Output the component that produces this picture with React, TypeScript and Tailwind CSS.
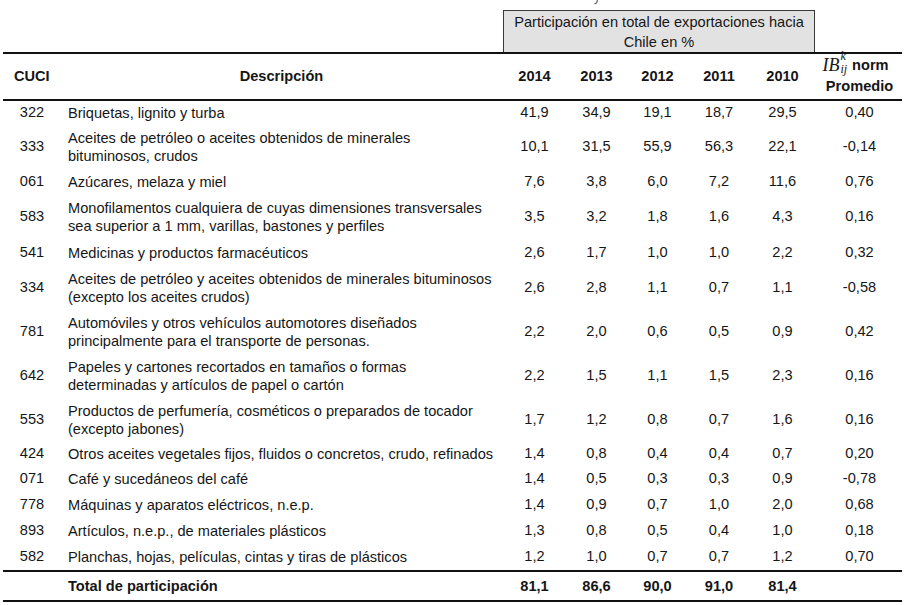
import React from "react";

interface Row {
  code: string;
  desc: string[];
  values: string[];
  ib: string;
  h: string;
}

// row heights tuned so the text centres fall where the scan puts them
const rows: Row[] = [
  { code: "322", desc: ["Briquetas, lignito y turba"], values: ["41,9", "34,9", "19,1", "18,7", "29,5"], ib: "0,40", h: "h-[24px]" },
  { code: "333", desc: ["Aceites de petróleo o aceites obtenidos de minerales", "bituminosos, crudos"], values: ["10,1", "31,5", "55,9", "56,3", "22,1"], ib: "-0,14", h: "h-[44px]" },
  { code: "061", desc: ["Azúcares, melaza y miel"], values: ["7,6", "3,8", "6,0", "7,2", "11,6"], ib: "0,76", h: "h-[26px]" },
  { code: "583", desc: ["Monofilamentos cualquiera de cuyas dimensiones transversales", "sea superior a 1 mm, varillas, bastones y perfiles"], values: ["3,5", "3,2", "1,8", "1,6", "4,3"], ib: "0,16", h: "h-[44px]" },
  { code: "541", desc: ["Medicinas y productos farmacéuticos"], values: ["2,6", "1,7", "1,0", "1,0", "2,2"], ib: "0,32", h: "h-[27px]" },
  { code: "334", desc: ["Aceites de petróleo y aceites obtenidos de minerales bituminosos", "(excepto los aceites crudos)"], values: ["2,6", "2,8", "1,1", "0,7", "1,1"], ib: "-0,58", h: "h-[44px]" },
  { code: "781", desc: ["Automóviles y otros vehículos automotores diseñados", "principalmente para el transporte de personas."], values: ["2,2", "2,0", "0,6", "0,5", "0,9"], ib: "0,42", h: "h-[44px]" },
  { code: "642", desc: ["Papeles y cartones recortados en tamaños o formas", "determinadas y artículos de papel o cartón"], values: ["2,2", "1,5", "1,1", "1,5", "2,3"], ib: "0,16", h: "h-[44px]" },
  { code: "553", desc: ["Productos de perfumería, cosméticos o preparados de tocador", "(excepto jabones)"], values: ["1,7", "1,2", "0,8", "0,7", "1,6"], ib: "0,16", h: "h-[44px]" },
  { code: "424", desc: ["Otros aceites vegetales fijos, fluidos o concretos, crudo, refinados"], values: ["1,4", "0,8", "0,4", "0,4", "0,7"], ib: "0,20", h: "h-[24px]" },
  { code: "071", desc: ["Café y sucedáneos del café"], values: ["1,4", "0,5", "0,3", "0,3", "0,9"], ib: "-0,78", h: "h-[26px]" },
  { code: "778", desc: ["Máquinas y aparatos eléctricos, n.e.p."], values: ["1,4", "0,9", "0,7", "1,0", "2,0"], ib: "0,68", h: "h-[26px]" },
  { code: "893", desc: ["Artículos, n.e.p., de materiales plásticos"], values: ["1,3", "0,8", "0,5", "0,4", "1,0"], ib: "0,18", h: "h-[26px]" },
  { code: "582", desc: ["Planchas, hojas, películas, cintas y tiras de plásticos"], values: ["1,2", "1,0", "0,7", "0,7", "1,2"], ib: "0,70", h: "h-[26px]" },
];

const years = ["2014", "2013", "2012", "2011", "2010"];
const totals = ["81,1", "86,6", "90,0", "91,0", "81,4"];

const cols = "grid grid-cols-[57px_443px_63px_61px_61px_62px_65px_87px]";

export default function App() {
  return (
    <div className="w-[907px] h-[605px] bg-white text-[#161616] font-['Liberation_Sans',Arial,sans-serif] text-[14.6px] overflow-hidden">
      <div className="ml-[3px] w-[899px]">
        {/* cut-off title fragment */}
        <div className="relative h-[10px]">
          <svg className="absolute left-[587px] top-0" width="10" height="5" viewBox="0 0 10 5">
            <path d="M7.5 0 L6.8 2.2 Q6.2 3.8 4.4 3.8" stroke="#555" strokeWidth="1.1" fill="none" />
          </svg>
        </div>

        {/* grouped header box */}
        <div className={cols}>
          <div className="col-start-3 col-span-5 h-[42px] border border-b-0 border-[#3a3a3a] bg-[#e2e2e2] flex flex-col items-center justify-center leading-[20px]">
            <span>Participación en total de exportaciones hacia</span>
            <span>Chile en %</span>
          </div>
        </div>
        <div className="h-[2px] bg-[#111]" />

        {/* column titles */}
        <div className={`${cols} h-[45px] items-center font-bold`}>
          <div className="pl-[11px]">CUCI</div>
          <div className="text-center">Descripción</div>
          {years.map((y) => (
            <div key={y} className="text-center">
              {y}
            </div>
          ))}
          <div className="flex flex-col items-center leading-[20px] -mt-[4px] pl-[2px]">
            <span className="flex items-center gap-[1px] -ml-[8px] h-[22px]">
              <span className="font-['Liberation_Serif',serif] italic font-normal text-[18px]">IB</span>
              <span className="flex flex-col font-['Liberation_Serif',serif] italic font-normal text-[12px] leading-[13px] mr-[4px] -mt-[4px]">
                <span>k</span>
                <span>ij</span>
              </span>
              <span>norm</span>
            </span>
            <span>Promedio</span>
          </div>
        </div>
        <div className="h-[2px] bg-[#111]" />

        {/* body */}
        {rows.map((r) => (
          <div key={r.code} className={`${cols} ${r.h} items-center`}>
            <div className="text-center pl-[1px]">{r.code}</div>
            <div className="pl-[8px] leading-[18px] flex flex-col">
              {r.desc.map((d) => (
                <span key={d} className="whitespace-nowrap">
                  {d}
                </span>
              ))}
            </div>
            {r.values.map((v, i) => (
              <div key={i} className="text-center">
                {v}
              </div>
            ))}
            <div className="text-center pl-[2px]">{r.ib}</div>
          </div>
        ))}
        <div className="h-[2px] bg-[#111]" />

        {/* total */}
        <div className={`${cols} h-[28px] items-center font-bold pt-[2px]`}>
          <div />
          <div className="pl-[8px]">Total de participación</div>
          {totals.map((v, i) => (
            <div key={i} className="text-center">
              {v}
            </div>
          ))}
          <div />
        </div>
        <div className="h-[2px] bg-[#111]" />
      </div>
    </div>
  );
}
